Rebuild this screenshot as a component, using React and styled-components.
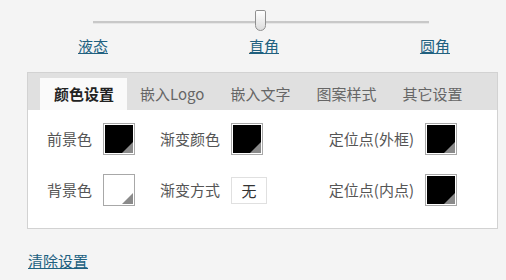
import React from 'react';
import styled, { createGlobalStyle } from 'styled-components';

const GlobalStyle = createGlobalStyle`
  html, body {
    margin: 0;
    padding: 0;
    background: #f4f4f4;
    font-family: "Microsoft YaHei", "Noto Sans CJK SC", "Noto Sans", sans-serif;
  }
`;

const Page = styled.div`
  width: 506px;
  height: 280px;
  overflow: hidden;
  padding-top: 10px;
  box-sizing: border-box;
`;

const SliderBlock = styled.div`
  margin-left: 78px;
  width: 372px;
`;

const TrackWrap = styled.div`
  position: relative;
  height: 22px;
  margin: 0 21px 0 15px;
`;

const Track = styled.div`
  position: absolute;
  left: 0;
  right: 0;
  top: 11px;
  height: 2px;
  background: #c8c8c8;
  border-bottom: 1px solid #e6e6e6;
`;

const Thumb = styled.div`
  position: absolute;
  left: 162px;
  top: 0;
  width: 9px;
  height: 19px;
  border: 1px solid #8f8f8f;
  border-radius: 2px 2px 6px 6px;
  background: linear-gradient(to bottom, #ffffff, #dcdcdc);
`;

const Labels = styled.div`
  display: flex;
  justify-content: space-between;
  margin-top: 4px;
`;

const Link = styled.a`
  font-size: 15px;
  line-height: 20px;
  color: #20607f;
  text-decoration: underline;
  cursor: pointer;
`;

const Panel = styled.div`
  margin: 16px 0 0 27px;
  width: 469px;
  border: 1px solid #d2d2d2;
  background: #fff;
`;

const TabBar = styled.div`
  display: flex;
  align-items: flex-end;
  height: 37px;
  padding-left: 12px;
  background: #e0e0e0;
`;

const Tab = styled.div`
  height: 32px;
  line-height: 32px;
  padding: 0 13px;
  font-size: 15px;
  color: ${p => (p.$active ? '#222' : '#666')};
  font-weight: ${p => (p.$active ? 'bold' : 'normal')};
  background: ${p => (p.$active ? '#fafafa' : 'transparent')};

  &:first-child {
    padding-left: 14px;
  }
`;

const Grid = styled.div`
  display: grid;
  grid-template-columns: 113px 1fr auto;
  row-gap: 19px;
  align-items: center;
  padding: 13px 40px 22px 19px;
`;

const Field = styled.div`
  display: flex;
  align-items: center;
  gap: 11px;
  justify-self: ${p => (p.$end ? 'end' : 'start')};
`;

const Label = styled.span`
  font-size: 15px;
  color: #555;
  line-height: 20px;
`;

const Swatch = styled.div`
  position: relative;
  width: 28px;
  height: 28px;
  padding: 1px;
  border: 1px solid #a8a8a8;
  background: #fff;
  background-clip: content-box;
  background-color: ${p => p.$color};

  &::after {
    content: '';
    position: absolute;
    right: 1px;
    bottom: 1px;
    width: 0;
    height: 0;
    border-style: solid;
    border-width: 0 0 11px 11px;
    border-color: transparent transparent #8a8a8a transparent;
  }
`;

const SelectBox = styled.div`
  width: 34px;
  height: 25px;
  border: 1px solid #e0e0e0;
  background: #fff;
  font-size: 15px;
  color: #333;
  line-height: 25px;
  text-align: center;
`;

const Footer = styled.div`
  margin: 19px 0 0 28px;
`;

const tabs = ['颜色设置', '嵌入Logo', '嵌入文字', '图案样式', '其它设置'];

export default function App() {
  return (
    <Page>
      <GlobalStyle />
      <SliderBlock>
        <TrackWrap>
          <Track />
          <Thumb />
        </TrackWrap>
        <Labels>
          <Link>液态</Link>
          <Link>直角</Link>
          <Link>圆角</Link>
        </Labels>
      </SliderBlock>

      <Panel>
        <TabBar>
          {tabs.map((t, i) => (
            <Tab key={t} $active={i === 0}>{t}</Tab>
          ))}
        </TabBar>
        <Grid>
          <Field>
            <Label>前景色</Label>
            <Swatch $color="#000" />
          </Field>
          <Field>
            <Label>渐变颜色</Label>
            <Swatch $color="#000" />
          </Field>
          <Field $end>
            <Label>定位点(外框)</Label>
            <Swatch $color="#000" />
          </Field>
          <Field>
            <Label>背景色</Label>
            <Swatch $color="#fff" />
          </Field>
          <Field>
            <Label>渐变方式</Label>
            <SelectBox>无</SelectBox>
          </Field>
          <Field $end>
            <Label>定位点(内点)</Label>
            <Swatch $color="#000" />
          </Field>
        </Grid>
      </Panel>

      <Footer>
        <Link>清除设置</Link>
      </Footer>
    </Page>
  );
}
